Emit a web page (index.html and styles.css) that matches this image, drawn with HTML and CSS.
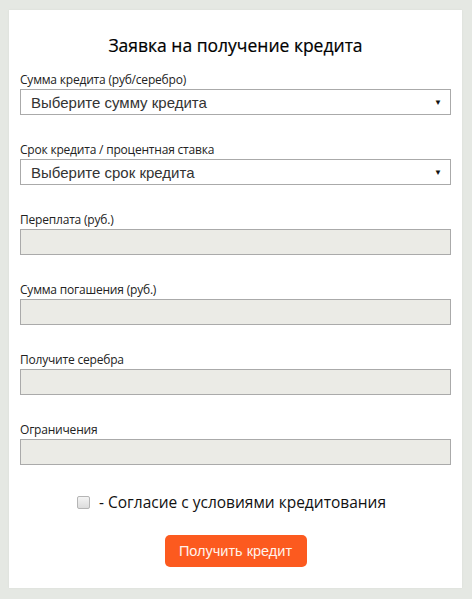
FILE: index.html
```html
<!DOCTYPE html>
<html>

<head>
	<link rel="stylesheet" href="styles.css">
</head>

<body>
	<div class="card">
		<h1>Заявка на получение кредита</h1>
		<div class="field">
			<label>Сумма кредита (руб/серебро)</label>
			<div class="select"><span>Выберите сумму кредита</span><span class="arrow">&#9660;</span></div>
		</div>
		<div class="field">
			<label>Срок кредита / процентная ставка</label>
			<div class="select"><span>Выберите срок кредита</span><span class="arrow">&#9660;</span></div>
		</div>
		<div class="field">
			<label>Переплата (руб.)</label>
			<input type="text" disabled>
		</div>
		<div class="field">
			<label>Сумма погашения (руб.)</label>
			<input type="text" disabled>
		</div>
		<div class="field">
			<label>Получите серебра</label>
			<input type="text" disabled>
		</div>
		<div class="field">
			<label>Ограничения</label>
			<input type="text" disabled>
		</div>
		<div class="agree">
			<span class="check"></span>
			<span>- Согласие с условиями кредитования</span>
		</div>
		<div class="actions">
			<button class="submit">Получить кредит</button>
		</div>
	</div>
</body>

</html>
```

FILE: styles.css
```css
body {
	margin: 0;
	padding: 10px 10px 11px 9px;
	background-color: #e5e8e3;
	font-family: 'Open Sans', 'Noto Sans', sans-serif;
	color: #111;
}

.card {
	background-color: white;
	height: 578px;
	box-sizing: border-box;
	padding: 23px 11px 0 11px;
	box-shadow: 0 0 2px rgba(0, 0, 0, 0.06);
}

h1 {
	margin: 0 0 14px 0;
	font-size: 17.5px;
	font-weight: 400;
	text-align: center;
	line-height: 24px;
	color: #000;
	-webkit-text-stroke: 0.2px #000;
}

.field {
	margin-bottom: 26px;
}

.field label {
	display: block;
	font-size: 12px;
	line-height: 18px;
	letter-spacing: -0.2px;
	color: #222;
}

.select,
.field input {
	display: flex;
	box-sizing: border-box;
	width: 100%;
	height: 26px;
	margin: 0;
	border: 1px solid #aaa;
	font-family: 'Liberation Sans', Arial, sans-serif;
}

.select {
	align-items: center;
	justify-content: space-between;
	padding: 0 8px 0 10px;
	font-size: 15px;
	color: #333;
}

.select .arrow {
	font-size: 8px;
	color: #111;
}

.field input {
	background-color: #ebebe6;
	padding: 0;
}

.agree {
	display: flex;
	justify-content: center;
	align-items: center;
	gap: 9px;
	margin-top: 4px;
	font-size: 15.5px;
	color: #111;
	padding-right: 8px;
}

.check {
	width: 11px;
	height: 11px;
	border: 1px solid #b5b5b5;
	border-radius: 2px;
	background: linear-gradient(#f4f4f4, #dcdcdc);
}

.actions {
	text-align: center;
	margin-top: 22px;
}

.submit {
	background-color: #fc5a1f;
	color: #fff2ea;
	border: none;
	border-radius: 5px;
	height: 32px;
	width: 142px;
	font-family: 'Liberation Sans', Arial, sans-serif;
	font-size: 14.5px;
	padding: 0;
}
```
